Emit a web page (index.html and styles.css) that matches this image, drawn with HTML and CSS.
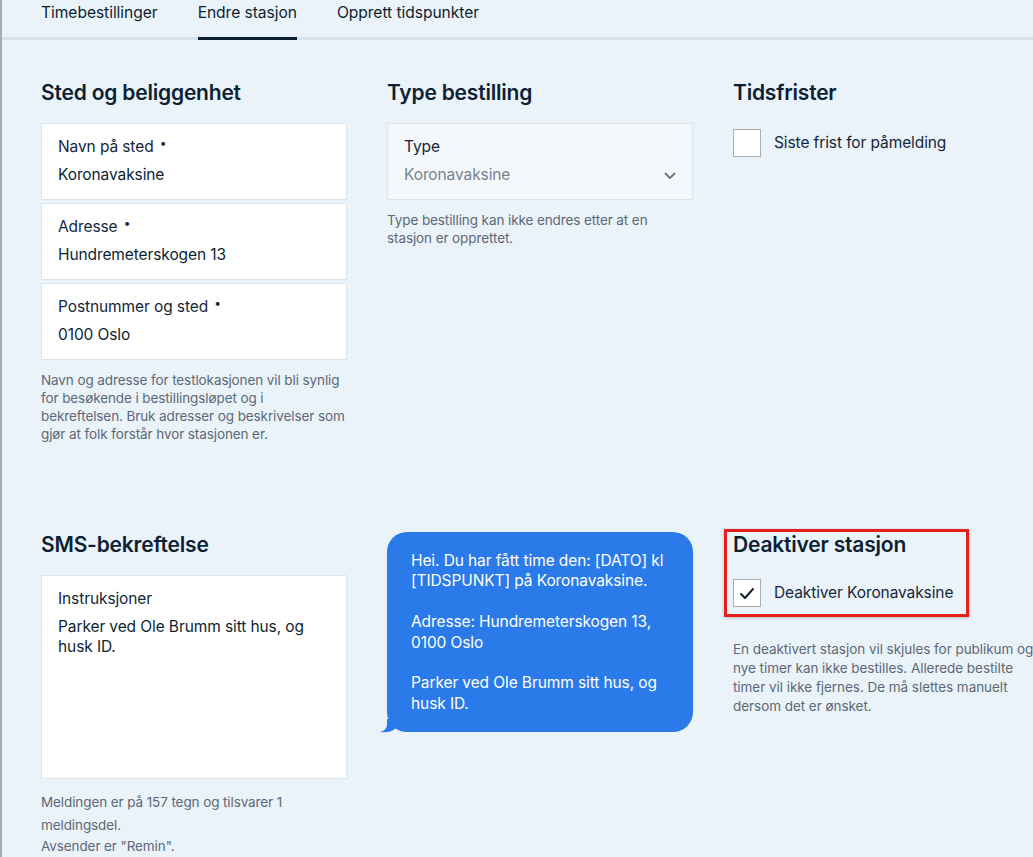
FILE: index.html
```html
<!DOCTYPE html>
<html lang="no">
<head>
<meta charset="utf-8">
<title>Endre stasjon</title>
<link rel="stylesheet" href="styles.css">
</head>
<body>
<div class="page">
  <nav class="tabs">
    <a class="tab">Timebestillinger</a>
    <a class="tab active">Endre stasjon</a>
    <a class="tab">Opprett tidspunkter</a>
  </nav>
  <main class="grid">
    <section class="col">
      <h2 class="heading">Sted og beliggenhet</h2>
      <div class="fields">
        <div class="field">
          <div class="label">Navn på sted <span class="req">•</span></div>
          <div class="value">Koronavaksine</div>
        </div>
        <div class="field">
          <div class="label">Adresse <span class="req">•</span></div>
          <div class="value">Hundremeterskogen 13</div>
        </div>
        <div class="field">
          <div class="label">Postnummer og sted <span class="req">•</span></div>
          <div class="value">0100 Oslo</div>
        </div>
      </div>
      <p class="help">Navn og adresse for testlokasjonen vil bli synlig for besøkende i bestillingsløpet og i bekreftelsen. Bruk adresser og beskrivelser som gjør at folk forstår hvor stasjonen er.</p>
    </section>
    <section class="col">
      <h2 class="heading">Type bestilling</h2>
      <div class="field select">
        <div class="label">Type</div>
        <div class="value muted">Koronavaksine</div>
        <svg class="chevron" width="12" height="8" viewBox="0 0 12 8"><path d="M1.5 1.5 L6 6 L10.5 1.5" fill="none" stroke="#6b7887" stroke-width="1.8" stroke-linecap="round" stroke-linejoin="round"/></svg>
      </div>
      <p class="help help-type">Type bestilling kan ikke endres etter at en stasjon er opprettet.</p>
    </section>
    <section class="col">
      <h2 class="heading">Tidsfrister</h2>
      <label class="check check-first">
        <span class="box"></span>
        <span class="check-label">Siste frist for påmelding</span>
      </label>
    </section>

    <section class="col">
      <h2 class="heading">SMS-bekreftelse</h2>
      <div class="field textarea">
        <div class="label">Instruksjoner</div>
        <div class="value multi">Parker ved Ole Brumm sitt hus, og husk ID.</div>
      </div>
      <p class="help help-sms">Meldingen er på 157 tegn og tilsvarer 1 meldingsdel.</p>
      <p class="help help-sender">Avsender er "Remin".</p>
    </section>
    <section class="col">
      <div class="bubble">
        <p>Hei. Du har fått time den: [DATO] kl [TIDSPUNKT] på Koronavaksine.</p>
        <p>Adresse: Hundremeterskogen 13, 0100 Oslo</p>
        <p>Parker ved Ole Brumm sitt hus, og husk ID.</p>
        <svg class="tail" width="22" height="14" viewBox="0 0 22 14"><path d="M7 0 L7 6 C7 9 4 12 0 13 C6 14 12 13 16 9 L22 9 L22 0 Z" fill="#2a7be9"/></svg>
      </div>
    </section>
    <section class="col deact">
      <div class="mark"></div>
      <h2 class="heading">Deaktiver stasjon</h2>
      <label class="check check-deact">
        <span class="box"><svg width="16" height="13" viewBox="0 0 16 13"><path d="M2 7 L6 11 L14 2" fill="none" stroke="#0c1f33" stroke-width="2" stroke-linecap="round" stroke-linejoin="round"/></svg></span>
        <span class="check-label">Deaktiver Koronavaksine</span>
      </label>
      <p class="help help-deact">En deaktivert stasjon vil skjules for publikum og nye timer kan ikke bestilles. Allerede bestilte timer vil ikke fjernes. De må slettes manuelt dersom det er ønsket.</p>
    </section>
  </main>
</div>
</body>
</html>
```

FILE: styles.css
```css
* { box-sizing: border-box; }
html, body { margin: 0; padding: 0; }
body {
  background: #ebf3fa;
  font-family: Inter, "Noto Sans", sans-serif;
  color: #0c1f33;
  width: 1033px;
  height: 857px;
  overflow: hidden;
}
.page {
  min-height: 857px;
  border-left: 2px solid #a9adb3;
}
.tabs {
  display: flex;
  gap: 40px;
  padding-left: 39px;
  border-bottom: 3px solid #dae3eb;
  height: 40px;
}
.tab {
  font-size: 15.6px;
  line-height: 20px;
  padding-top: 3px;
  color: #0c1f33;
  letter-spacing: -0.05px;
  position: relative;
}
.tab.active::after {
  content: "";
  position: absolute;
  left: 0; right: 0;
  bottom: -3px;
  height: 3px;
  background: #0c1f33;
}
.grid {
  display: grid;
  grid-template-columns: 306px 306px 302px;
  column-gap: 40px;
  row-gap: 89px;
  padding: 40px 0 0 39px;
}
.col { position: relative; }
.heading {
  margin: 0 0 17px;
  font-size: 21px;
  line-height: 26px;
  font-weight: 600;
  letter-spacing: -0.2px;
  color: #0c1f33;
}
.fields { display: flex; flex-direction: column; gap: 3px; }
.field {
  background: #fff;
  border: 1px solid #dde4ea;
  height: 77px;
  padding: 13px 16px 0;
}
.label {
  font-size: 15.5px;
  line-height: 20px;
  color: #14263a;
  letter-spacing: -0.1px;
}
.req {
  font-size: 12px;
  line-height: 0;
  position: relative;
  top: -5px;
  margin-left: 2px;
}
.value {
  margin-top: 8px;
  font-size: 15.5px;
  line-height: 20px;
  color: #0c1f33;
  letter-spacing: -0.1px;
}
.value.muted { color: #76838f; }
.select {
  background: #f4f8fb;
  position: relative;
}
.chevron { position: absolute; right: 16px; top: 48px; }
.help {
  margin: 0;
  font-size: 13.5px;
  line-height: 18px;
  color: #5b6877;
  letter-spacing: -0.1px;
}
.col .help { margin-top: 11px; }
.check {
  display: flex;
  align-items: center;
  gap: 13px;
}
.check-first { margin-top: 23px; }
.box {
  width: 28px; height: 28px;
  background: #fff;
  border: 1px solid #a9aeb3;
  display: flex;
  align-items: center;
  justify-content: center;
}
.check-label {
  font-size: 15.5px;
  line-height: 20px;
  color: #14263a;
  letter-spacing: -0.1px;
}
.textarea { height: 204px; padding-top: 13px; }
.value.multi { margin-top: 8px; line-height: 20px; }
.col .help-sms { margin-top: 12px; line-height: 23px; }
.col .help-sender { margin-top: 0; line-height: 19px; }
.bubble {
  position: relative;
  background: #2a7be9;
  color: #fff;
  border-radius: 20px;
  padding: 19px 24px 18px;
  height: 200px;
  font-size: 15.5px;
  line-height: 20.4px;
  letter-spacing: -0.1px;
}
.bubble p { margin: 0 0 20.4px; }
.bubble p:last-of-type { margin-bottom: 0; }
.tail { position: absolute; left: -7px; bottom: -1px; }
.deact .heading { margin-bottom: 21px; }
.check-deact { margin-top: 0; }
.col .help-deact { margin-top: 33px; line-height: 19px; letter-spacing: -0.05px; }
.mark {
  position: absolute;
  left: -9px;
  top: -3px;
  width: 245px;
  height: 88px;
  border: 3px solid #e5201c;
  box-shadow: 0 1px 3px rgba(0,0,0,0.25);
  pointer-events: none;
}
```
